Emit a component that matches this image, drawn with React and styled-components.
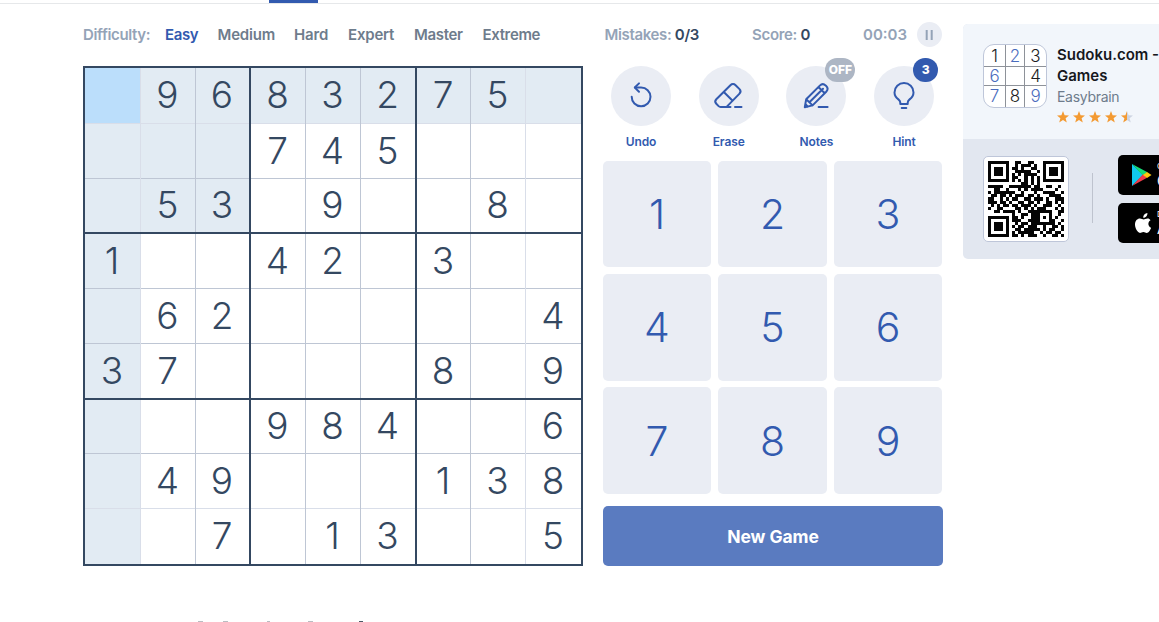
import React from "react";
import styled, { createGlobalStyle } from "styled-components";

const Global = createGlobalStyle`
  * { box-sizing: border-box; }
  html, body { margin: 0; height: 622px; overflow: hidden; background: #fff; }
  body { font-family: Inter, "Liberation Sans", sans-serif; }
  button { font: inherit; border: 0; padding: 0; }
`;

const Page = styled.div`
  width: 1159px;
  height: 622px;
  overflow: hidden;
`;
const NavEdge = styled.header`
  height: 4px;
  padding-left: 269px;
  border-bottom: 1px solid #e6e8ea;
`;
const ActiveTab = styled.div`
  width: 49px;
  height: 3px;
  background: #325aaf;
`;
const Main = styled.main`
  display: flex;
  height: 616px;
  padding-left: 83px;
`;
const Game = styled.section`
  width: 500px;
`;
const Difficulty = styled.nav`
  height: 62px;
  padding-bottom: 2px;
  display: flex;
  align-items: center;
  font-size: 15px;
  font-weight: 600;
  white-space: nowrap;
`;
const Level = styled.span`
  width: ${(p) => p.$w}px;
  color: ${(p) => p.$color || "#6e7c8c"};
  letter-spacing: ${(p) => p.$ls ?? -0.2}px;
`;
const Board = styled.div`
  display: grid;
  grid-template: 56px 55px 55px 55px 55px 56px 54px 55px 55px / 56px 55px 55px 55px 55px 56px 54px 55px 55px;
  width: 500px;
  height: 500px;
  border: 2px solid #344861;
`;
const lineWidth = (n) => (n === 8 ? 0 : n % 3 === 2 ? 2 : 1);
const lineColor = (n) => (n % 3 === 2 ? "#344861" : n === 0 || n === 7 ? "#d9dee9" : "#bec6d4");
const lines = ({ $r, $c }) => {
  const right = `inset -${lineWidth($c)}px 0 ${lineColor($c)}`;
  const bottom = `inset 0 -${lineWidth($r)}px ${lineColor($r)}`;
  return $r % 3 === 2 ? `${bottom}, ${right}` : `${right}, ${bottom}`;
};
const Cell = styled.div`
  display: flex;
  align-items: center;
  justify-content: center;
  padding: 0 ${(p) => lineWidth(p.$c) + 1}px ${(p) => lineWidth(p.$r) + 2}px 0;
  box-shadow: ${lines};
  background: ${(p) => (p.$r === 0 && p.$c === 0 ? "#bbdefb" : p.$r === 0 || p.$c === 0 || (p.$r < 3 && p.$c < 3) ? "#e2ebf3" : "#fff")};
  color: #344861;
  font-size: 37px;
  font-weight: 300;
  line-height: 1;
`;
const NextHeading = styled.div`
  display: flex;
  margin-top: 55px;
  padding-left: 115px;
`;
const Tip = styled.i`
  width: ${(p) => p.$w}px;
  height: 1px;
  margin-right: ${(p) => p.$gap}px;
  background: ${(p) => p.$color || "#b9bdc2"};
`;
const Controls = styled.section`
  width: 340px;
  margin-left: 20px;
`;
const Status = styled.div`
  height: 62px;
  padding-bottom: 1px;
  display: flex;
  align-items: center;
  color: #94a3b7;
  font-size: 15px;
  font-weight: 600;
  white-space: nowrap;
  b { color: #344861; font-weight: 600; }
`;
const Stat = styled.span`
  width: ${(p) => p.$w}px;
  padding-left: ${(p) => p.$pad || 0}px;
  padding-bottom: 1px;
  letter-spacing: ${(p) => p.$ls || 0}px;
`;
const Pause = styled.button`
  display: flex;
  align-items: center;
  justify-content: center;
  width: 25px;
  height: 25px;
  border-radius: 50%;
  background: #eaedf4;
`;
const Tools = styled.div`
  display: flex;
  gap: 27.7px;
  height: 95px;
  padding-left: 8px;
`;
const Tool = styled.div`
  position: relative;
  width: 60px;
  display: flex;
  flex-direction: column;
  align-items: center;
  color: #325aaf;
  font-size: 12px;
  font-weight: 600;
  letter-spacing: -0.1px;
  line-height: 16px;
`;
const Circle = styled.div`
  width: 60px;
  height: 60px;
  margin-bottom: 8px;
  border-radius: 50%;
  background: #eaedf4;
  svg { display: block; }
`;
const Badge = styled.span`
  position: absolute;
  top: -8px;
  left: 39px;
  width: ${(p) => p.$w}px;
  height: 24px;
  border-radius: 12px;
  background: ${(p) => p.$bg};
  color: #fff;
  font-size: 12px;
  font-weight: 800;
  line-height: 24px;
  text-align: center;
`;
const Pad = styled.div`
  display: grid;
  grid-template: 106px 107px 107px / 108px 109px 108px;
  column-gap: 7px;
  row-gap: 6.5px;
`;
const Key = styled.button`
  border-radius: 5px;
  background: #eaedf4;
  color: #325aaf;
  font-size: 41px;
  font-weight: 300;
`;
const NewGame = styled.button`
  width: 340px;
  height: 60px;
  margin-top: 12px;
  border-radius: 5px;
  background: #5a7bc0;
  color: #fff;
  font-size: 17.5px;
  font-weight: 700;
  letter-spacing: -0.1px;
`;
const Promo = styled.aside`
  flex: none;
  width: 300px;
  height: 235px;
  margin: 20px 0 0 20px;
  border-radius: 5px;
  overflow: hidden;
  background: #e2e7f0;
`;
const AppInfo = styled.div`
  display: flex;
  gap: 10px;
  height: 115px;
  padding: 20px 0 0 20px;
  background: #f2f6fb;
`;
const MiniBoard = styled.div`
  display: grid;
  grid-template: 22px 19px 21px / 22px 19px 21px;
  width: 64px;
  height: 64px;
  border: 1px solid #bec6d9;
  border-radius: 11px;
  overflow: hidden;
  background: #fff;
`;
const MiniCell = styled.span`
  display: flex;
  align-items: center;
  justify-content: center;
  padding-top: ${(p) => (p.$n < 3 ? 2 : 0)}px;
  border-right: ${(p) => (p.$n % 3 < 2 ? "1px solid #8e9299" : "0")};
  border-bottom: ${(p) => (p.$n < 6 ? "1px solid #8e9299" : "0")};
  color: ${(p) => (p.$blue ? "#4a6cbd" : "#1c1c1e")};
  font-size: 17px;
  font-weight: 350;
  line-height: 1;
`;
const AppText = styled.div`
  white-space: nowrap;
  line-height: 21px;
`;
const AppName = styled.div`
  color: #16181d;
  font-size: 15px;
  font-weight: 600;
`;
const Maker = styled.div`
  color: #6e7c8c;
  font-size: 14px;
  letter-spacing: -0.3px;
`;
const Stores = styled.div`
  display: flex;
  padding: 16px 0 0 20px;
`;
const QrCard = styled.div`
  width: 86px;
  height: 86px;
  margin-top: 1px;
  padding: 4px;
  border: 1px solid #bec6d9;
  border-radius: 5px;
  background: #fff;
  svg { display: block; }
`;
const Divider = styled.div`
  width: 1px;
  height: 50px;
  margin: 18px 25px 0 23px;
  background: #bec3ce;
`;
const StoreList = styled.div`
  display: grid;
  gap: 8px;
`;
const Store = styled.div`
  display: flex;
  align-items: center;
  width: 130px;
  height: 40px;
  border-radius: 5px;
  background: #000;
  color: #fff;
  font-size: 14px;
  line-height: 18px;
  white-space: nowrap;
  svg { flex: none; display: block; width: 39px; }
  small { display: block; font-size: 8px; line-height: 11px; }
`;

const puzzle = [
  " 9683275 ", "   745   ", " 53 9  8 ",
  "1  42 3  ", " 62     4", "37    8 9",
  "   984  6", " 49   138", "  7 13  5",
];

const qr = [
  "1111111001100110001111111",
  "1000001001011101001000001",
  "1011101011010011001011101",
  "1011101001111100101011101",
  "1011101010101111001011101",
  "1000001011001010101000001",
  "1111111010101010101111111",
  "0000000000011010100000000",
  "1111100111111101100110010",
  "0011001000101011110000100",
  "1011111110010001001111001",
  "0110110101110110100011110",
  "1100101011001101110100111",
  "1110110100110110100110101",
  "0101011011011101001110010",
  "1001100001101010111000101",
  "0011011110100111111110011",
  "0000000010011011100010010",
  "1111111011010011101010100",
  "1000001011100111100011001",
  "1011101001011011111111010",
  "1011101010110111001001101",
  "1011101001101111101011001",
  "1000001010111110010110110",
  "1111111011010111001001101",
];

const QrCode = () => (
  <svg width="76" height="76" viewBox="0 0 25 25" shapeRendering="crispEdges">
    <path fill="#050505" d={qr.map((row, y) => [...row].map((v, x) => (v === "1" ? `M${x} ${y}h1v1h-1z` : "")).join("")).join("")} />
  </svg>
);

const Icon = ({ children }) => (
  <svg width="60" height="60" viewBox="0 0 60 60" fill="none" stroke="#325aaf" strokeWidth="2" strokeLinecap="round" strokeLinejoin="round">
    {children}
  </svg>
);
const UndoIcon = () => (
  <Icon>
    <path d="M20.7 30.8A9.4 9.4 0 1 0 30 21.5H24" />
    <path d="M28 17.4l-4.2 4.1 4.2 4.2" />
  </Icon>
);
const EraseIcon = () => (
  <Icon>
    <path d="M17.3 33.2 31.4 19.2c1.6-1.6 3.6-1.6 5.2 0l3.7 3.7c1.6 1.6 1.6 3.4 0 5L27.6 40.9h-6c-1 0-1.4-.2-2-.8l-2.3-2.4c-1.3-1.3-1.3-3.1 0-4.5zM24.8 26l8.8 8.8M22 40.9h9.5M36 40.9h6.5" />
  </Icon>
);
const NotesIcon = () => (
  <Icon>
    <path d="M18.8 41.2 20.2 33.2 33.8 19.6c1.9-1.9 4-1.9 5.8-.2l.6.6c1.8 1.8 1.8 3.9 0 5.8L26.6 39.4zM20.2 33.2l6.4 6.2M23.4 36.3 37 22.7M32.4 21l6.4 6.3M19.6 38.2l2.2 2.4M32.6 40.9h9" />
  </Icon>
);
const HintIcon = () => (
  <Icon>
    <path d="M26.3 38v-1.2c0-1.5-.6-2.4-1.9-3.4-2.5-2-3.9-4-3.9-7a9.5 9.3 0 0 1 19 0c0 3-1.4 5-3.9 7-1.3 1-1.9 1.9-1.9 3.4V38zM27.7 42.1h4.6" />
  </Icon>
);

const Star = ({ x, fill }) => (
  <path transform={`translate(${x} 0)`} fill={fill} d="M6 0 7.6 4.2 12 4.4 8.6 7.2 9.8 11.6 6 9.1 2.2 11.6 3.4 7.2 0 4.4 4.4 4.2z" />
);
const Stars = () => (
  <StarRow width="78" height="12" viewBox="0 0 78 12">
    <defs>
      <linearGradient id="half">
        <stop offset="50%" stopColor="#f39a32" />
        <stop offset="50%" stopColor="#cdd4e2" />
      </linearGradient>
    </defs>
    {[0, 16, 32, 48].map((x) => <Star key={x} x={x} fill="#f39a32" />)}
    <Star x={64} fill="url(#half)" />
  </StarRow>
);
const StarRow = styled.svg`
  display: block;
  margin-top: 4px;
`;
const PlayLogo = () => (
  <svg height="40" viewBox="0 0 39 40">
    <path fill="#10c8ee" d="M14 9v22l11-11z" />
    <path fill="#16dc78" d="M14 9l15.5 8.3L25 20.8z" />
    <path fill="#f13b4b" d="M14 31l15-8.2-4-3.6z" />
    <path fill="#ffc90e" d="M29 16.9l4.5 3.1-4.5 3.1-4-3.1z" />
  </svg>
);
const AppleLogo = () => (
  <svg height="40" viewBox="0 0 39 40" fill="#fff">
    <path d="M29.4 10c.2 2.7-1.8 4.8-4.2 4.8-.2-2.4 1.8-4.5 4.2-4.8zM32.5 17.2c-3.2 2-2.6 6.2.6 7.5-.8 2.3-2.5 5.2-4.4 5.2-1.2 0-1.7-.8-3.3-.8s-2.1.8-3.4.8c-2.4 0-5-4.7-5-8.3 0-3.8 2.3-6 4.9-6 1.6 0 2.7 1 3.8 1s2.3-1.1 4.1-1c1 0 2 .6 2.7 1.6z" />
  </svg>
);

export default function App() {
  return (
    <Page>
      <Global />
      <NavEdge><ActiveTab /></NavEdge>
      <Main>
        <Game>
          <Difficulty>
            <Level $w={82} $color="#94a3b7" $ls={-0.35}>Difficulty:</Level>
            <Level $w={52.5} $color="#325aaf" $ls={-0.4}>Easy</Level>
            <Level $w={76.5}>Medium</Level>
            <Level $w={54} $ls={-0.1}>Hard</Level>
            <Level $w={66}>Expert</Level>
            <Level $w={68.5} $ls={-0.35}>Master</Level>
            <Level $w={60} $ls={-0.35}>Extreme</Level>
          </Difficulty>
          <Board>
            {puzzle.flatMap((row, r) => [...row].map((v, c) => <Cell key={`${r}${c}`} $r={r} $c={c}>{v.trim()}</Cell>))}
          </Board>
          <NextHeading>
            <Tip $w={5} $gap={20} /><Tip $w={5} $gap={39} /><Tip $w={3} $gap={38} /><Tip $w={5} $gap={46} /><Tip $w={4} $gap={0} $color="#4c5866" />
          </NextHeading>
        </Game>
        <Controls>
          <Status>
            <Stat $w={149} $pad={1.5} $ls={-0.35}>Mistakes: <b>0/3</b></Stat>
            <Stat $w={111} $ls={-0.3}>Score: <b>0</b></Stat>
            <Stat $w={54}>00:03</Stat>
            <Pause aria-label="Pause">
              <svg width="9" height="12"><path d="M1.7 1v10M6.7 1v10" stroke="#94a3b7" strokeWidth="2" /></svg>
            </Pause>
          </Status>
          <Tools>
            <Tool><Circle><UndoIcon /></Circle>Undo</Tool>
            <Tool><Circle><EraseIcon /></Circle>Erase</Tool>
            <Tool><Circle><NotesIcon /></Circle>Notes<Badge $w={30} $bg="#adb6c4">OFF</Badge></Tool>
            <Tool><Circle><HintIcon /></Circle>Hint<Badge $w={25} $bg="#325aaf">3</Badge></Tool>
          </Tools>
          <Pad>{[1, 2, 3, 4, 5, 6, 7, 8, 9].map((n) => <Key key={n}>{n}</Key>)}</Pad>
          <NewGame>New Game</NewGame>
        </Controls>
        <Promo>
          <AppInfo>
            <MiniBoard>
              {[..."1236 4789"].map((v, n) => <MiniCell key={n} $n={n} $blue={"2679".includes(v)}>{v.trim()}</MiniCell>)}
            </MiniBoard>
            <AppText>
              <AppName>Sudoku.com - Number<br />Games</AppName>
              <Maker>Easybrain</Maker>
              <Stars />
            </AppText>
          </AppInfo>
          <Stores>
            <QrCard><QrCode /></QrCard>
            <Divider />
            <StoreList>
              <Store><PlayLogo /><span><small>GET IT ON</small>Google Play</span></Store>
              <Store><AppleLogo /><span><small>Download on the</small>App Store</span></Store>
            </StoreList>
          </Stores>
        </Promo>
      </Main>
    </Page>
  );
}
